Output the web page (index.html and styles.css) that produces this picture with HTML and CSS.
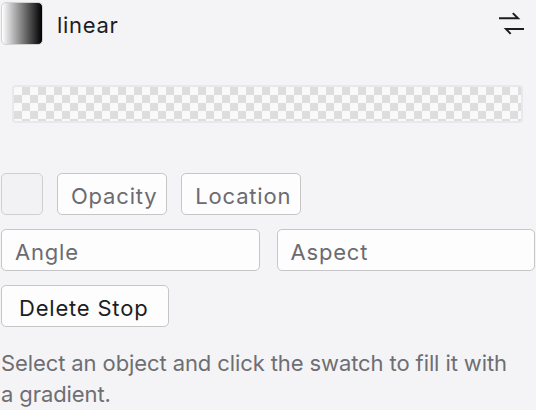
FILE: index.html
```html
<!DOCTYPE html>
<html>
<head>
<meta charset="utf-8">
<link rel="stylesheet" href="styles.css">
</head>
<body>
<div class="panel">
  <div class="header">
    <div class="swatch"></div>
    <span class="type">linear</span>
    <svg class="swap" width="26" height="24" viewBox="0 0 26 24">
      <path d="M2 7.3 H20 L15.5 2.8" fill="none" stroke="#1d1d1f" stroke-width="2" stroke-linecap="square" stroke-linejoin="miter"/>
      <path d="M25 18 H8 L12 22.2" fill="none" stroke="#1d1d1f" stroke-width="2" stroke-linecap="square" stroke-linejoin="miter"/>
    </svg>
  </div>
  <div class="strip-wrap"><div class="strip"></div></div>
  <div class="row">
    <div class="stop"></div>
    <button class="btn muted">Opacity</button>
    <button class="btn muted">Location</button>
  </div>
  <div class="row inputs">
    <div class="field">Angle</div>
    <div class="field">Aspect</div>
  </div>
  <div class="row">
    <button class="btn wide">Delete Stop</button>
  </div>
  <p class="hint">Select an object and click the swatch to fill it with a gradient.</p>
</div>
</body>
</html>
```
FILE: styles.css
```css
html, body {
  margin: 0;
  background: #f4f4f6;
}
body {
  font-family: Inter, "Noto Sans", sans-serif;
  width: 536px;
  height: 410px;
  overflow: hidden;
}
.panel {
  padding: 2px 1px 0 1px;
  display: flex;
  flex-direction: column;
}
.header {
  display: flex;
  align-items: center;
  height: 43px;
}
.swatch {
  width: 40px;
  height: 41px;
  border: 1px solid #d2d2d4;
  border-radius: 5px;
  background: linear-gradient(to right, #ffffff 0%, #000000 100%);
}
.type {
  margin-left: 14px;
  margin-top: 2px;
  font-size: 22px;
  letter-spacing: 0.7px;
  color: #1d1d1f;
  flex: 1;
}
.swap {
  margin-right: 11px;
  margin-top: -1px;
}
.strip-wrap {
  padding: 40px 12px 0 11px;
}
.strip {
  height: 34px;
  border: 2px solid #e8e8ea;
  border-radius: 4px;
  background-color: #f9f9f9;
  background-image:
    linear-gradient(45deg, #dddddd 25%, transparent 25%, transparent 75%, #dddddd 75%),
    linear-gradient(45deg, #dddddd 25%, transparent 25%, transparent 75%, #dddddd 75%);
  background-size: 16px 16px;
  background-position: 0 0, 8px 8px;
}
.row {
  display: flex;
  gap: 14px;
  margin-top: 14px;
}
.strip-wrap + .row {
  margin-top: 50px;
}
.stop {
  width: 40px;
  height: 40px;
  border: 1px solid #cfcfd1;
  border-radius: 5px;
  background: #f2f2f4;
}
.btn {
  font-family: inherit;
  font-size: 22px;
  letter-spacing: 0.8px;
  height: 42px;
  padding: 4px 9px 0 13px;
  border: 1px solid #c6c6c8;
  border-radius: 5px;
  background: #fdfdfe;
  color: #1d1d1f;
  line-height: 36px;
}
.btn.wide {
  padding: 4px 20px 0 17px;
}
.btn.muted {
  color: #6b6b70;
}
.inputs {
  gap: 17px;
}
.field {
  flex: 1;
  height: 36px;
  border: 1px solid #c6c6c8;
  border-radius: 5px;
  background: #fdfdfe;
  color: #6b6b70;
  font-size: 22px;
  letter-spacing: 0.8px;
  line-height: 36px;
  padding: 4px 0 0 13px;
}
.hint {
  margin: 21px 20px 0 0;
  font-size: 22px;
  letter-spacing: -0.1px;
  line-height: 31px;
  color: #6e6e73;
}
```
